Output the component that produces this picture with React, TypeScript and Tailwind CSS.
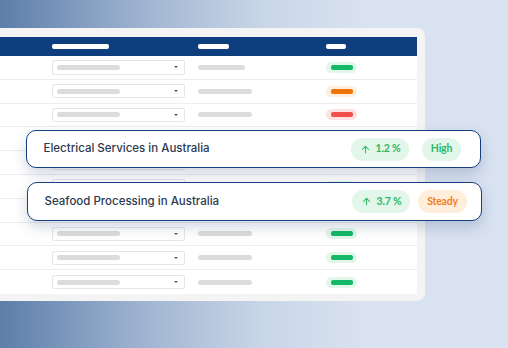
import { ArrowUp } from 'lucide-react'

type Status = 'green' | 'orange' | 'red'

const rows: { bar: number; status: Status }[] = [
  { bar: 47, status: 'green' },
  { bar: 54, status: 'orange' },
  { bar: 54, status: 'red' },
  { bar: 54, status: 'green' },
  { bar: 54, status: 'green' },
  { bar: 54, status: 'green' },
  { bar: 54, status: 'green' },
  { bar: 54, status: 'green' },
  { bar: 54, status: 'green' },
  { bar: 54, status: 'green' },
]

const pillBg: Record<Status, string> = {
  green: 'bg-[#e2f6ea]',
  orange: 'bg-[#fdeedd]',
  red: 'bg-[#fde2e2]',
}

const pillBar: Record<Status, string> = {
  green: 'bg-[#14b866]',
  orange: 'bg-[#ef7407]',
  red: 'bg-[#f14f4b]',
}

function SelectStub() {
  return (
    <div className="flex h-[14.5px] w-[133px] items-center justify-between rounded-[2px] border border-[#e6e6e6] bg-white pl-[4px] pr-[6px]">
      <div className="h-[5px] w-[63px] rounded-full bg-[#dcdcdc]" />
      <div className="h-0 w-0 border-x-[2px] border-t-[2.5px] border-x-transparent border-t-[#555]" />
    </div>
  )
}

function TableRow({ bar, status, last }: { bar: number; status: Status; last: boolean }) {
  return (
    <div
      className={`grid h-[23.8px] grid-cols-[52px_146px_128px_1fr] items-center bg-white ${
        last ? '' : 'border-b border-[#ededed]'
      }`}
    >
      <div />
      <SelectStub />
      <div className="h-[5px] rounded-full bg-[#dcdcdc]" style={{ width: bar }} />
      <div className={`flex h-[11px] w-[31px] items-center justify-center rounded-full ${pillBg[status]}`}>
        <div className={`h-[5px] w-[22px] rounded-[2px] ${pillBar[status]}`} />
      </div>
    </div>
  )
}

interface IndustryCardProps {
  title: string
  growth: string
  label: string
  tone: 'green' | 'orange'
  className: string
}

function IndustryCard({ title, growth, label, tone, className }: IndustryCardProps) {
  const badge = tone === 'green' ? 'bg-[#e2f6ea] text-[#2cb867]' : 'bg-[#ffeedc] text-[#f57d1c]'
  return (
    <div
      className={`absolute flex w-[455px] items-center rounded-[10px] border-[1.5px] border-[#153f80] bg-white pl-[16.5px] pr-[8.5px] shadow-[0_6px_14px_rgba(25,55,105,0.2)] ${className}`}
    >
      <span className="flex-1 text-[11.5px] font-medium text-[#2b3950]">{title}</span>
      <div className="flex w-[61px]">
        <span className="flex h-[23px] items-center gap-[5px] rounded-full bg-[#e2f6ea] pl-[9px] pr-[9px] font-['Lato'] text-[10.5px] font-bold tracking-[-0.2px] text-[#2cb867]">
          <ArrowUp size={11} strokeWidth={2.25} />
          {growth}
        </span>
      </div>
      <div className="flex w-[60px] justify-center">
        <span className={`flex h-[23px] items-center rounded-full px-[9px] font-['Lato'] text-[10.5px] font-bold tracking-[-0.2px] ${badge}`}>
          {label}
        </span>
      </div>
    </div>
  )
}

export default function App() {
  return (
    <div className="relative h-[348px] w-[508px] overflow-hidden bg-[linear-gradient(90deg,#5d7eaa_0%,#a3b7d3_30%,#c9d6e8_52%,#d9e2f0_72%)] pt-[28px] font-['Inter',sans-serif]">
      <div className="-ml-[12px] w-[437px] rounded-r-[8px] bg-[#f4f4f4] pb-[7.5px] pl-[12px] pr-[8px] pt-[9px]">
        <div className="grid h-[19px] grid-cols-[52px_146px_128px_1fr] items-center bg-[#0f3e7e]">
          <div />
          <div className="h-[5px] w-[57px] rounded-[2px] bg-white" />
          <div className="h-[5px] w-[31px] rounded-[2px] bg-white" />
          <div className="h-[5px] w-[20px] rounded-[2px] bg-white" />
        </div>
        {rows.map((r, i) => (
          <TableRow key={i} bar={r.bar} status={r.status} last={i === rows.length - 1} />
        ))}
      </div>

      <IndustryCard
        title="Electrical Services in Australia"
        growth="1.2 %"
        label="High"
        tone="green"
        className="left-[26px] top-[130px] h-[38px]"
      />
      <IndustryCard
        title="Seafood Processing in Australia"
        growth="3.7 %"
        label="Steady"
        tone="orange"
        className="left-[27px] top-[182px] h-[39px]"
      />
    </div>
  )
}
